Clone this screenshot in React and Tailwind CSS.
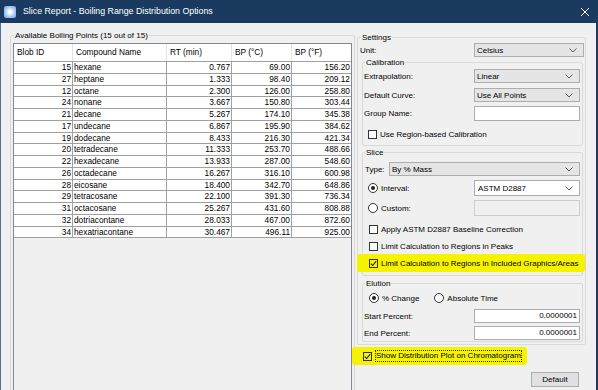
import React from 'react'

const rows = [
  [15, 'hexane', '0.767', '69.00', '156.20'],
  [27, 'heptane', '1.333', '98.40', '209.12'],
  [12, 'octane', '2.300', '126.00', '258.80'],
  [24, 'nonane', '3.667', '150.80', '303.44'],
  [21, 'decane', '5.267', '174.10', '345.38'],
  [17, 'undecane', '6.867', '195.90', '384.62'],
  [19, 'dodecane', '8.433', '216.30', '421.34'],
  [20, 'tetradecane', '11.333', '253.70', '488.66'],
  [22, 'hexadecane', '13.933', '287.00', '548.60'],
  [26, 'octadecane', '16.267', '316.10', '600.98'],
  [28, 'eicosane', '18.400', '342.70', '648.86'],
  [29, 'tetracosane', '22.100', '391.30', '736.34'],
  [31, 'octacosane', '25.267', '431.60', '808.88'],
  [32, 'dotriacontane', '28.033', '467.00', '872.60'],
  [34, 'hexatriacontane', '30.467', '496.11', '925.00'],
]

function Chevron() {
  return (
    <svg width="8" height="5" viewBox="0 0 8 5" className="shrink-0">
      <path d="M0.5 0.5 L4 4 L7.5 0.5" fill="none" stroke="#5a5a5a" strokeWidth="1" />
    </svg>
  )
}

function Combo({ value, className }) {
  return (
    <div className={`flex items-center justify-between pl-[2px] pr-[6px] bg-[#e5e5e5] border border-[#adadad] ${className}`}>
      <span>{value}</span>
      <Chevron />
    </div>
  )
}

function Checkbox({ checked, clear }) {
  return (
    <span className={`w-[9px] h-[9px] shrink-0 border border-[#333] flex items-center justify-center ${clear ? 'bg-transparent' : 'bg-white'}`}>
      {checked && (
        <svg width="7" height="7" viewBox="0 0 7 7">
          <path d="M0.8 3.6 L2.7 5.5 L6.2 1.2" fill="none" stroke="#222" strokeWidth="1.1" />
        </svg>
      )}
    </span>
  )
}

function Radio({ checked }) {
  return (
    <span className="w-[10px] h-[10px] shrink-0 rounded-full border border-[#333] bg-white flex items-center justify-center">
      {checked && <span className="w-[4px] h-[4px] rounded-full bg-[#222]" />}
    </span>
  )
}

export default function App() {
  return (
    <div className="w-[598px] h-[390px] overflow-hidden bg-[#1a3b5f] font-['Liberation_Sans',Arial,sans-serif] text-[8px] leading-[11px] text-black">
      {/* title bar */}
      <div className="h-[23px] flex items-center pl-[4px] pr-[8px] text-white">
        <div className="w-[12px] h-[12px] rounded-[2px] bg-[radial-gradient(circle,#ffffff_15%,#a9cdf2_55%,#6d9fd8)]" />
        <span className="ml-[7px] text-[8.8px]">Slice Report - Boiling Range Distribution Options</span>
        <svg width="10" height="10" viewBox="0 0 10 10" className="ml-auto">
          <path d="M1 1 L9 9 M9 1 L1 9" stroke="#fff" strokeWidth="1" />
        </svg>
      </div>

      {/* body */}
      <div className="flex items-start h-[367px] w-[596px] bg-[#f0f0f0] border-l border-[#4f709a]">
        {/* left: table */}
        <fieldset className="ml-[9px] mt-[7px] w-[345px] h-[380px] border border-[#d9d9d9] rounded-[2px] px-[2px] shrink-0">
          <legend className="ml-[1px] px-[1px] leading-[11px]">Available Boiling Points (15 out of 15)</legend>
          <div className="mt-[2px] w-[339px] h-[360px] border border-[#828790] bg-[#f0f0f0] text-[8.3px]">
            <div className="flex h-[18px] bg-white border-b border-[#a0a0a0]">
              <div className="w-[59px] pl-[3px] flex items-center border-r border-[#e3e3e3]">Blob ID</div>
              <div className="w-[94px] pl-[3px] flex items-center border-r border-[#e3e3e3]">Compound Name</div>
              <div className="w-[65px] pl-[3px] flex items-center border-r border-[#e3e3e3]">RT (min)</div>
              <div className="w-[60px] pl-[3px] flex items-center border-r border-[#e3e3e3]">BP (°C)</div>
              <div className="w-[59px] pl-[3px] flex items-center">BP (°F)</div>
            </div>
            {rows.map(r => (
              <div key={r[0]} className="flex h-[11.75px] bg-white border-b border-[#a0a0a0] leading-[10.5px]">
                <div className="w-[59px] text-right pr-[1px] border-r border-[#a0a0a0]">{r[0]}</div>
                <div className="w-[94px] pl-[1px] border-r border-[#a0a0a0]">{r[1]}</div>
                <div className="w-[65px] text-right pr-[1px] border-r border-[#a0a0a0]">{r[2]}</div>
                <div className="w-[60px] text-right pr-[1px] border-r border-[#a0a0a0]">{r[3]}</div>
                <div className="w-[59px] text-right pr-[1px]">{r[4]}</div>
              </div>
            ))}
          </div>
        </fieldset>

        {/* right: settings */}
        <div className="ml-[2px] w-[229px] shrink-0">
          <fieldset className="mt-[9px] border border-[#d9d9d9] rounded-[2px] pl-[2px] pr-[1px] pb-[2px]">
            <legend className="ml-[1px] px-[1px] leading-[11px]">Settings</legend>
            <div className="flex items-center justify-between h-[14px]">
              <span>Unit:</span>
              <Combo value="Celsius" className="w-[110px] h-[14px]" />
            </div>

            <fieldset className="ml-[2px] mr-[1px] border border-[#d9d9d9] rounded-[2px] pl-[1px] pr-[2px] pb-[6px]">
              <legend className="ml-[1px] px-[1px] leading-[11px]">Calibration</legend>
              <div className="mt-[1px] flex items-center justify-between h-[14px]">
                <span>Extrapolation:</span>
                <Combo value="Linear" className="w-[106px] h-[14px]" />
              </div>
              <div className="mt-[5px] flex items-center justify-between h-[14px]">
                <span>Default Curve:</span>
                <Combo value="Use All Points" className="w-[106px] h-[14px]" />
              </div>
              <div className="mt-[4px] flex items-center justify-between h-[15px]">
                <span>Group Name:</span>
                <div className="w-[106px] h-[15px] bg-white border border-[#abadb3]" />
              </div>
              <div className="mt-[8px] flex items-center h-[10px] pl-[4px] gap-[3px]">
                <Checkbox />
                <span>Use Region-based Calibration</span>
              </div>
            </fieldset>

            <fieldset className="mt-[1px] ml-[2px] mr-[1px] border border-[#d9d9d9] rounded-[2px] pl-[2px] pr-[2px] pb-[3px]">
              <legend className="px-[1px] leading-[11px]">Slice</legend>
              <div className="mt-[4px] flex items-center justify-between h-[14px]">
                <span>Type:</span>
                <Combo value="By % Mass" className="w-[191px] h-[14px]" />
              </div>
              <div className="mt-[4px] flex items-center h-[16px]">
                <span className="ml-[3px]"><Radio checked /></span>
                <span className="ml-[3px]">Interval:</span>
                <div className="ml-auto w-[106px] h-[16px] flex items-center justify-between pl-[3px] pr-[6px] bg-white border border-[#abadb3]">
                  <span>ASTM D2887</span>
                  <Chevron />
                </div>
              </div>
              <div className="mt-[4px] flex items-center h-[16px]">
                <span className="ml-[3px]"><Radio /></span>
                <span className="ml-[3px]">Custom:</span>
                <div className="ml-auto w-[106px] h-[16px] bg-[#f0f0f0] border border-[#cccccc]" />
              </div>
              <div className="mt-[7px] flex items-center h-[12px] pl-[4px] gap-[3px]">
                <Checkbox />
                <span>Apply ASTM D2887 Baseline Correction</span>
              </div>
              <div className="mt-[5px] flex items-center h-[12px] pl-[4px] gap-[3px]">
                <Checkbox />
                <span>Limit Calculation to Regions in Peaks</span>
              </div>
              <div className="mt-[2px] -ml-[8px] -mr-[5px] flex items-center h-[18px] pl-[12px] gap-[3px] bg-[#f6f300] rounded-[3px]">
                <Checkbox checked clear />
                <span>Limit Calculation to Regions in Included Graphics/Areas</span>
              </div>
            </fieldset>

            <fieldset className="mt-[2px] ml-[2px] mr-[1px] border border-[#d9d9d9] rounded-[2px] pl-[1px] pr-[2px] pb-[1px]">
              <legend className="ml-[1px] px-[1px] leading-[11px]">Elution</legend>
              <div className="mt-[3px] flex items-center h-[12px]">
                <span className="ml-[5px]"><Radio checked /></span>
                <span className="ml-[3px]">% Change</span>
                <span className="ml-[15px]"><Radio /></span>
                <span className="ml-[3px]">Absolute Time</span>
              </div>
              <div className="mt-[5px] flex items-center justify-between h-[14px]">
                <span>Start Percent:</span>
                <div className="w-[106px] h-[14px] bg-white border border-[#abadb3] text-right pr-[2px] leading-[12px]">0.0000001</div>
              </div>
              <div className="mt-[3px] flex items-center justify-between h-[14px]">
                <span>End Percent:</span>
                <div className="w-[106px] h-[14px] bg-white border border-[#abadb3] text-right pr-[2px] leading-[12px]">0.0000001</div>
              </div>
            </fieldset>
          </fieldset>

          <div className="mt-[2px] -ml-[5px] w-[175px] flex items-center h-[18px] pl-[11px] gap-[3px] bg-[#f6f300] rounded-[3px]">
            <Checkbox checked clear />
            <span className="border border-dotted border-[#333] leading-[10px]">Show Distribution Plot on Chromatogram</span>
          </div>

          <div className="mt-[7px] flex justify-end pr-[7px]">
            <div className="w-[48px] h-[15px] flex items-center justify-center bg-[#e1e1e1] border border-[#adadad]">Default</div>
          </div>
        </div>
      </div>
    </div>
  )
}
